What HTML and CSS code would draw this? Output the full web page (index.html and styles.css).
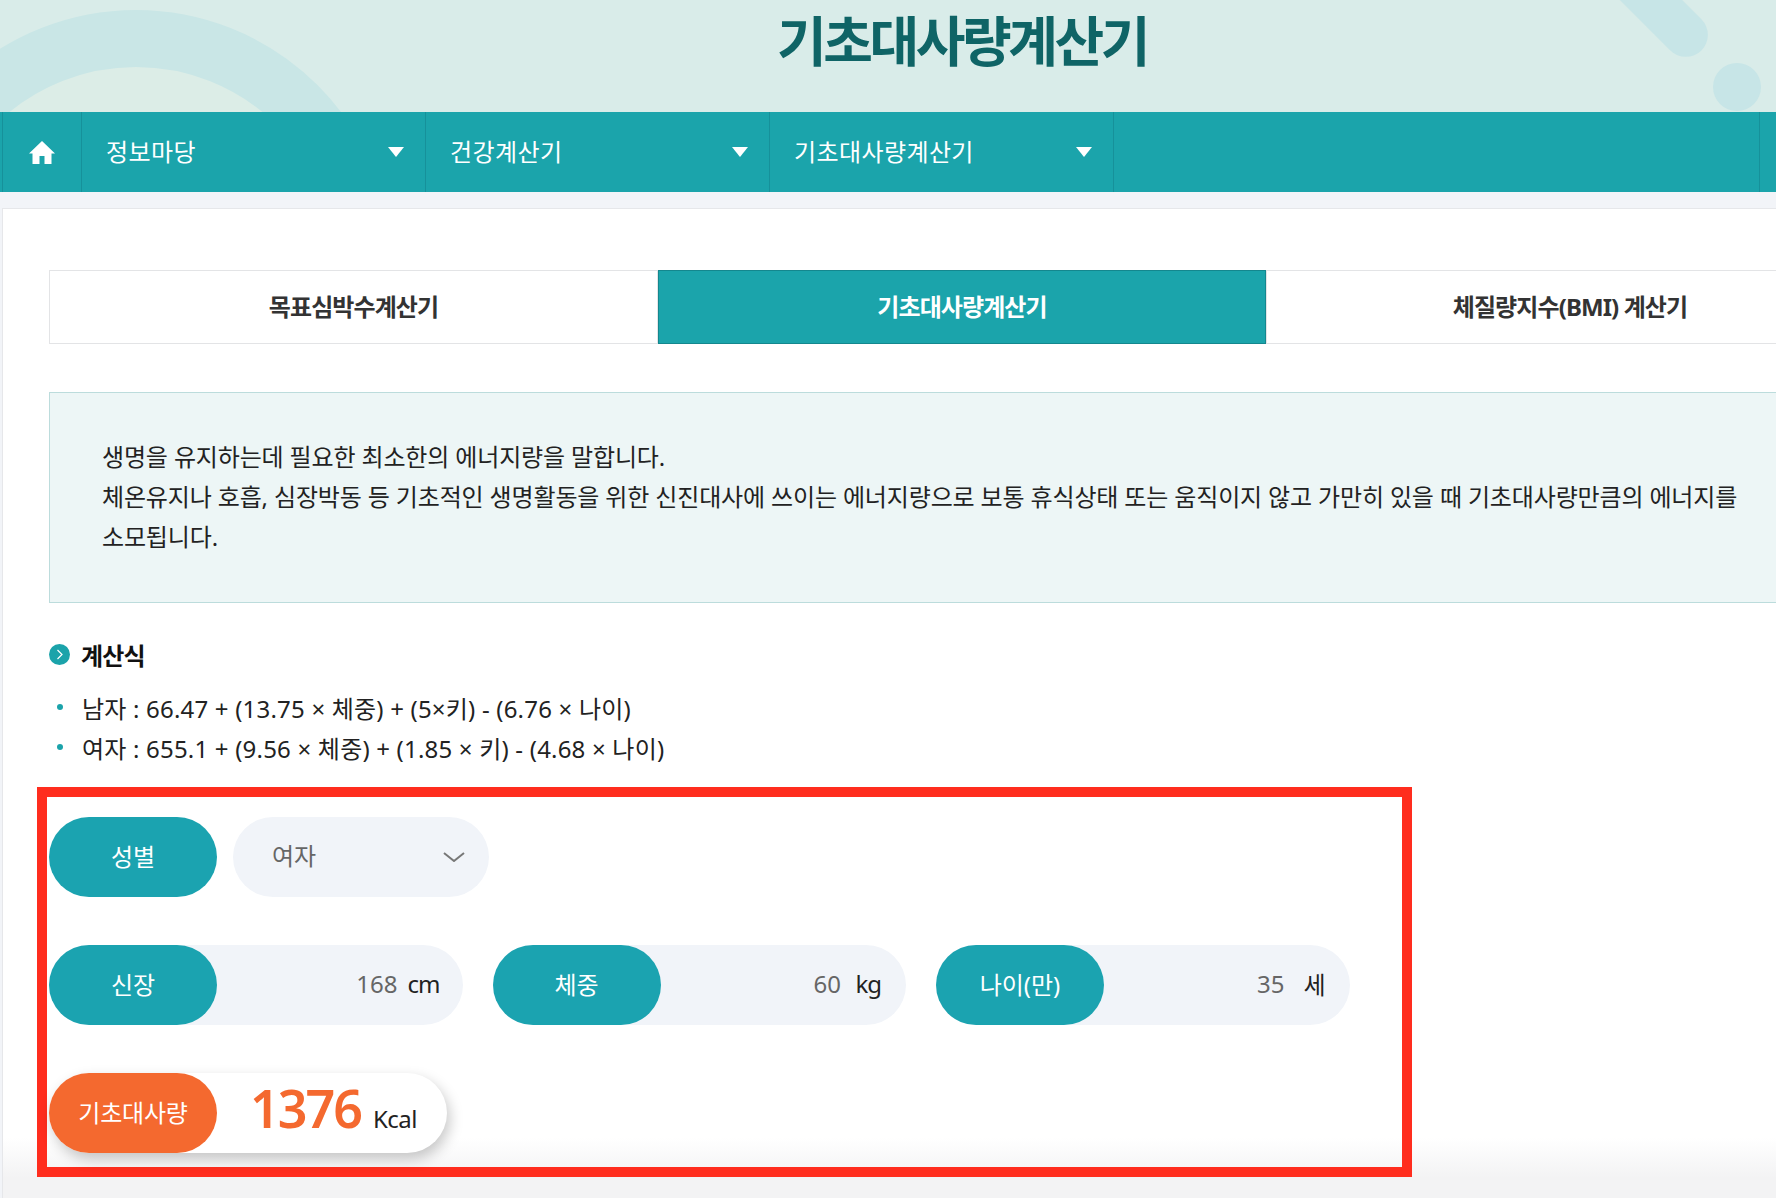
FILE: index.html
```html
<!DOCTYPE html>
<html lang="ko">
<head>
  <meta charset="UTF-8" />
  <meta name="viewport" content="width=device-width, initial-scale=1.0"/>
  <title>기초대사량계산기</title>
  <link rel="stylesheet" href="styles.css">
</head>
<body>

  <header class="cabecera">
    <span class="deco-arco"></span>
    <span class="deco-barra"></span>
    <span class="deco-punto"></span>
    <h1>기초대사량계산기</h1>
  </header>

  <nav class="menu">
    <a class="menu-home" href="#">
      <svg width="26" height="23" viewBox="0 0 26 23"><path d="M13 0 L26 12.5 L22.5 12.5 L22.5 23 L15.5 23 L15.5 15 L10.5 15 L10.5 23 L3.5 23 L3.5 12.5 L0 12.5 Z" fill="#fff"/></svg>
    </a>
    <a class="menu-item" href="#">정보마당</a>
    <a class="menu-item" href="#">건강계산기</a>
    <a class="menu-item" href="#">기초대사량계산기</a>
    <div class="menu-resto"></div>
  </nav>

  <main class="panel">
    <div class="tabs">
      <a class="tab" href="#">목표심박수계산기</a>
      <a class="tab activo" href="#">기초대사량계산기</a>
      <a class="tab" href="#">체질량지수(BMI) 계산기</a>
    </div>

    <div class="info">
      생명을 유지하는데 필요한 최소한의 에너지량을 말합니다.<br>
      체온유지나 호흡, 심장박동 등 기초적인 생명활동을 위한 신진대사에 쓰이는 에너지량으로 보통 휴식상태 또는 움직이지 않고 가만히 있을 때 기초대사량만큼의 에너지를 소모됩니다.
    </div>

    <h2 class="titulo">
      <svg width="21" height="21" viewBox="0 0 21 21"><circle cx="10.5" cy="10.5" r="10.5" fill="#1ba3aa"/><path d="M8.5 6 L13 10.5 L8.5 15" fill="none" stroke="#fff" stroke-width="1.2"/></svg>
      계산식
    </h2>
    <ul class="formulas">
      <li>남자 : 66.47 + (13.75 × 체중) + (5×키) - (6.76 × 나이)</li>
      <li>여자 : 655.1 + (9.56 × 체중) + (1.85 × 키) - (4.68 × 나이)</li>
    </ul>

    <section class="marco">
      <div class="fila">
        <div class="campo campo-select">
          <span class="etiqueta">성별</span>
          <span class="opcion">여자</span>
          <svg class="flecha" width="22" height="10" viewBox="0 0 22 10"><path d="M1 1 L11 9 L21 1" fill="none" stroke="#777" stroke-width="2"/></svg>
        </div>
      </div>
      <div class="fila">
        <div class="campo">
          <span class="etiqueta">신장</span>
          <span class="valor">168</span><span class="unidad">cm</span>
        </div>
        <div class="campo">
          <span class="etiqueta">체중</span>
          <span class="valor">60</span><span class="unidad">kg</span>
        </div>
        <div class="campo">
          <span class="etiqueta">나이(만)</span>
          <span class="valor">35</span><span class="unidad">세</span>
        </div>
      </div>
      <div class="fila">
        <div class="resultado">
          <span class="etiqueta naranja">기초대사량</span>
          <span class="numero">1376</span>
          <span class="kcal">Kcal</span>
        </div>
      </div>
    </section>
  </main>

</body>
</html>
```

FILE: styles.css
```css
html, body {
  margin: 0;
  padding: 0;
  height: 1198px;
  overflow: hidden;
}

body {
  width: 1924px;
  background: #f2f4f8;
  font-family: "Noto Sans", "Noto Sans CJK KR", sans-serif;
  color: #222;
}

a {
  text-decoration: none;
}

.cabecera {
  position: relative;
  height: 112px;
  overflow: hidden;
  background: #d9ece9;
}

.cabecera h1 {
  position: relative;
  margin: 0;
  text-align: center;
  font-size: 54px;
  line-height: 82px;
  font-weight: 700;
  letter-spacing: -3.4px;
  color: #0f6466;
}

.deco-arco {
  position: absolute;
  left: -121px;
  top: 10px;
  width: 400px;
  height: 400px;
  border: 57px solid #c9e6e6;
  border-radius: 50%;
  background: #dcede7;
}

.deco-barra {
  position: absolute;
  left: 1637px;
  top: -52px;
  width: 44px;
  height: 120px;
  border-radius: 22px;
  background: #c7e5e7;
  transform: rotate(-45deg);
}

.deco-punto {
  position: absolute;
  left: 1713px;
  top: 63px;
  width: 48px;
  height: 48px;
  border-radius: 50%;
  background: #c7e5e7;
}

.menu {
  display: flex;
  height: 80px;
  background: #1ba4ab;
  padding-left: 2px;
}

.menu a {
  display: flex;
  align-items: center;
  border-left: 1px solid #16919a;
  color: #fff;
}

.menu-home {
  width: 79px;
  justify-content: center;
  box-sizing: border-box;
}

.menu-item {
  position: relative;
  box-sizing: border-box;
  width: 344px;
  padding: 0 0 4px 24px;
  font-size: 24px;
  letter-spacing: 0.4px;
}

.menu-item::after {
  content: "";
  position: absolute;
  right: 21px;
  top: 35px;
  border-left: 8px solid transparent;
  border-right: 8px solid transparent;
  border-top: 10px solid #fff;
}

.menu-resto {
  box-sizing: border-box;
  width: 647px;
  border-left: 1px solid #16919a;
  border-right: 1px solid #16919a;
}

.panel {
  box-sizing: border-box;
  height: 990px;
  margin: 16px 0 0 2px;
  padding: 61px 0 0 46px;
  border: 1px solid #e6e7ea;
  border-bottom: none;
  background: linear-gradient(to bottom, #fff calc(100% - 60px), #f3f3f4 calc(100% - 20px));
}

.tabs {
  display: grid;
  grid-template-columns: 609px 608px 608px;
  height: 74px;
}

.tab {
  display: flex;
  align-items: center;
  justify-content: center;
  padding-bottom: 4px;
  border: 1px solid #e3e4e6;
  font-size: 24px;
  font-weight: 700;
  letter-spacing: -0.9px;
  color: #333;
}

.tab.activo {
  background: #1ba4ab;
  border-color: #14878e;
  color: #fff;
}

.info {
  box-sizing: border-box;
  width: 1825px;
  height: 211px;
  margin-top: 48px;
  padding: 44px 90px 0 52px;
  border: 1px solid #bcdcdc;
  background: #edf6f6;
  font-size: 24px;
  line-height: 40px;
  letter-spacing: -0.15px;
  word-break: keep-all;
  color: #222;
}

.titulo {
  display: flex;
  align-items: center;
  gap: 11px;
  margin: 31px 0 0;
  height: 40px;
  font-size: 24px;
  font-weight: 700;
  letter-spacing: -0.8px;
  color: #111;
}

.formulas {
  list-style: none;
  margin: 13px 0 0;
  padding: 0;
}

.formulas li {
  display: flex;
  align-items: center;
  height: 40px;
  font-size: 24px;
  letter-spacing: 0.2px;
  color: #222;
}

.formulas li::before {
  content: "";
  width: 6px;
  height: 6px;
  margin: 0 19px 0 8px;
  border-radius: 50%;
  background: #1ba3aa;
}

.marco {
  box-sizing: border-box;
  width: 1375px;
  height: 390px;
  margin: 20px 0 0 -12px;
  padding: 20px 0 0 2px;
  border: 10px solid #ff2d1e;
}

.fila {
  display: flex;
  gap: 30px;
  margin-bottom: 48px;
}

.campo {
  display: flex;
  align-items: center;
  box-sizing: border-box;
  width: 413.5px;
  height: 80px;
  padding-right: 25px;
  border-radius: 40px;
  background: #f1f4f9;
  font-size: 24px;
}

.etiqueta {
  display: flex;
  align-items: center;
  justify-content: center;
  flex: none;
  box-sizing: border-box;
  width: 168px;
  height: 80px;
  padding-bottom: 3px;
  border-radius: 40px;
  background: #1ba3b0;
  color: #fff;
  font-size: 24px;
  letter-spacing: 0;
}

.etiqueta.naranja {
  background: #f4692f;
  letter-spacing: -0.2px;
}

.valor {
  margin: 0 0 3px auto;
  color: #666;
}

.unidad {
  width: 30px;
  margin: 0 0 3px 10px;
  text-align: right;
  color: #222;
  letter-spacing: -1px;
}

.campo-select {
  width: 424px;
  padding-right: 0;
  background: none;
  border-radius: 0;
}

.campo-select .opcion {
  display: flex;
  align-items: center;
  width: 256px;
  height: 80px;
  margin-left: 16px;
  padding: 0 0 5px 39px;
  box-sizing: border-box;
  border-radius: 40px;
  background: #f1f4f9;
  color: #666;
}

.campo-select .flecha {
  position: relative;
  margin-left: -46px;
}

.resultado {
  display: flex;
  align-items: center;
  width: 398px;
  height: 80px;
  border-radius: 40px;
  background: #fff;
  box-shadow: 3px 6px 14px rgba(0, 0, 0, 0.22);
}

.numero {
  margin-left: 33px;
  padding-bottom: 10px;
  font-size: 52px;
  font-weight: 600;
  line-height: 70px;
  letter-spacing: -2px;
  color: #f4692f;
}

.kcal {
  margin: 10px 0 0 12px;
  font-size: 24px;
  letter-spacing: -0.5px;
  color: #222;
}
```
